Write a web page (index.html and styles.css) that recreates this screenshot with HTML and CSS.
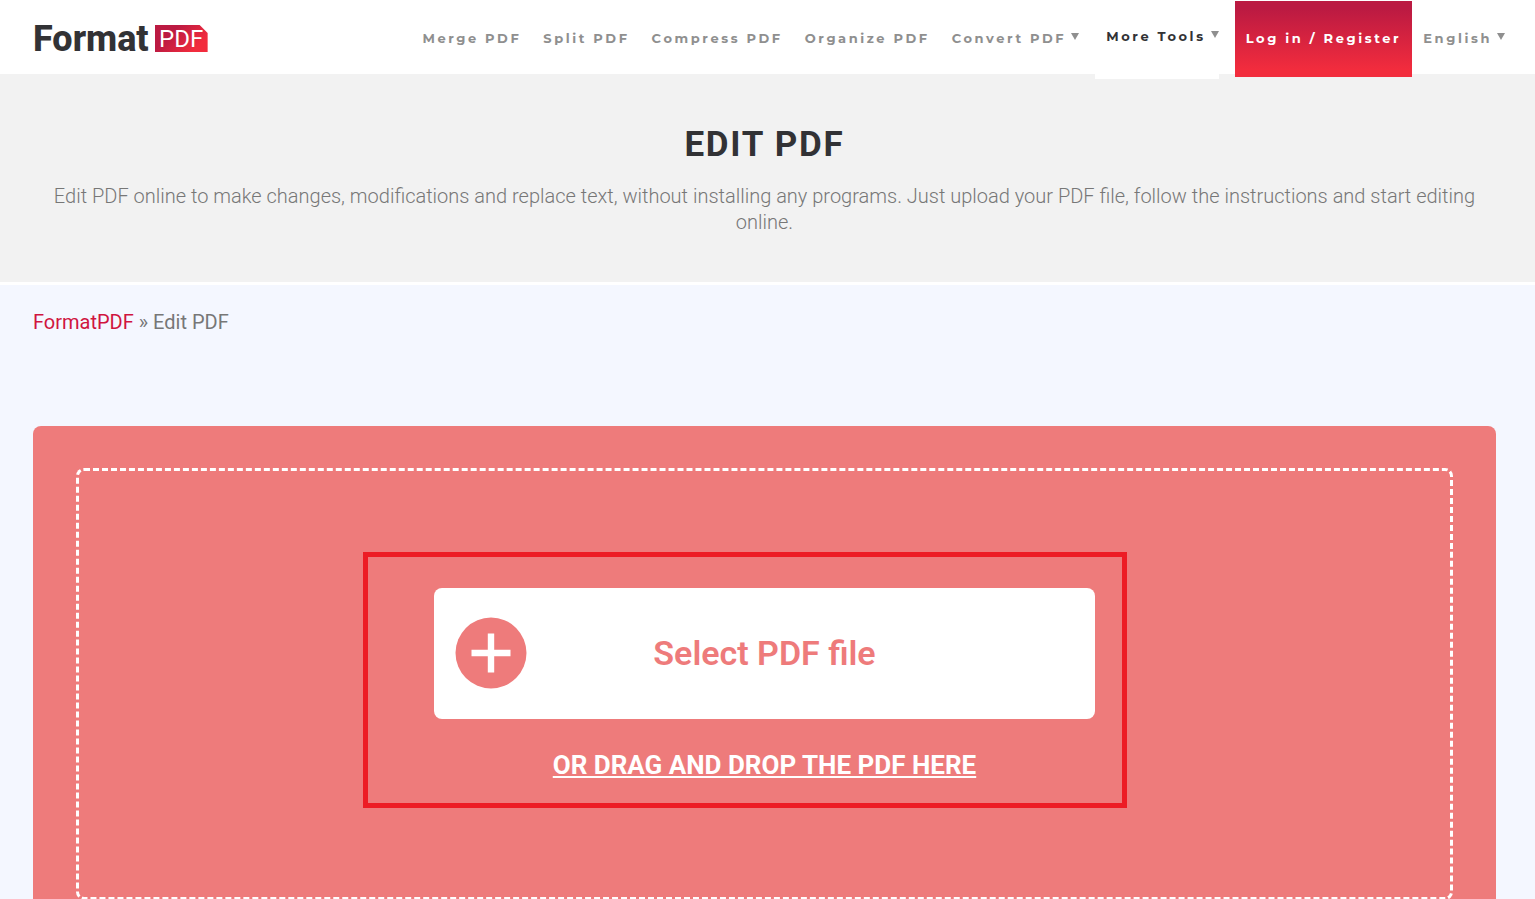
FILE: index.html
```html
<!DOCTYPE html>
<html lang="en">
<head>
  <meta charset="UTF-8">
  <meta name="viewport" content="width=device-width, initial-scale=1.0">
  <title>Edit PDF | FormatPDF</title>
  <link rel="stylesheet" href="styles.css">
</head>
<body>
  <header class="site-header">
    <a href="#" class="logo">
      <span class="logo-name">Format</span>
      <span class="logo-badge">PDF</span>
    </a>
    <nav class="main-nav">
      <a href="#">Merge PDF</a>
      <a href="#">Split PDF</a>
      <a href="#">Compress PDF</a>
      <a href="#">Organize PDF</a>
      <a href="#" class="has-menu">Convert PDF</a>
      <a href="#" class="has-menu active">More Tools</a>
      <a href="#" class="login">Log in / Register</a>
      <a href="#" class="has-menu">English</a>
    </nav>
  </header>

  <section class="hero">
    <h1>EDIT PDF</h1>
    <p>Edit PDF online to make changes, modifications and replace text, without installing any programs. Just upload your PDF file, follow the instructions and start editing online.</p>
  </section>

  <main class="content">
    <div class="breadcrumb"><a href="#">FormatPDF</a> » Edit PDF</div>

    <div class="upload">
      <div class="drop-zone">
        <div class="drop-content">
          <button type="button" class="select-btn">
            <svg class="plus" viewBox="0 0 72 72" aria-hidden="true">
              <circle cx="36" cy="36" r="35.5" fill="#ee7b7b"/>
              <path d="M36 16.5v39M16.5 36h39" stroke="#fff" stroke-width="6.4"/>
            </svg>
            Select PDF file
          </button>
          <p class="drop-text">OR DRAG AND DROP THE PDF HERE</p>
          <div class="highlight"></div>
        </div>
      </div>
    </div>
  </main>
</body>
</html>
```
FILE: styles.css
```css
* {
  box-sizing: border-box;
}

body {
  margin: 0;
  height: 100vh;
  overflow: hidden;
  font-family: Roboto, sans-serif;
  background: #f4f7ff;
  color: #777;
}

a {
  text-decoration: none;
}

/* header */
.site-header {
  display: flex;
  justify-content: space-between;
  height: 74px;
  padding: 0 19px 0 33px;
  background: #fff;
}

.logo {
  display: flex;
  align-items: center;
  gap: 6px;
  padding-top: 3px;
}

.logo-name {
  color: #323235;
  font-size: 36px;
  font-weight: 800;
  line-height: 28px;
}

.logo-badge {
  width: 53px;
  height: 27px;
  color: #fff;
  font-size: 24px;
  line-height: 28px;
  text-align: center;
  background: linear-gradient(135deg, #bb1a42 30%, #f22c3d 80%);
  clip-path: polygon(0 0, 45px 0, 100% 8px, 100% 100%, 0 100%);
}

.main-nav {
  display: flex;
  font-family: Montserrat, Inter, sans-serif;
  font-size: 13px;
  font-weight: 700;
  letter-spacing: 0.2em;
  line-height: 77px;
  white-space: nowrap;
}

.main-nav a {
  height: 76px;
  padding: 0 11px;
  color: #8f8f8f;
}

.has-menu::after {
  content: "";
  display: inline-block;
  margin-left: 5px;
  border: 4px solid transparent;
  border-top: 7px solid #8f8f8f;
  border-bottom: 0;
  vertical-align: 3px;
}

.main-nav .active {
  height: 79px;
  margin: 0 16px 0 5px;
  padding-right: 0;
  color: #323235;
  background: #fff;
  line-height: 73px;
}

.main-nav .login {
  margin-top: 1px;
  color: #fff;
  background: linear-gradient(#bb1a42 10%, #f22c3d 90%);
  line-height: 75px;
}

/* hero */
.hero {
  padding: 49px 39px 47px 33px;
  border-bottom: 3px solid #fff;
  background: #f2f2f2;
  text-align: center;
}

.hero h1 {
  margin: 0 0 16px;
  color: #323235;
  font-size: 35px;
  letter-spacing: 0.05em;
  line-height: 44px;
}

.hero p {
  margin: 0;
  font-size: 20px;
  font-weight: 300;
  line-height: 26px;
}

/* upload */
.content {
  padding: 24px 39px 0 33px;
}

.breadcrumb {
  font-size: 20px;
  line-height: 26px;
}

.breadcrumb a {
  color: #d0153f;
}

.upload {
  margin-top: 91px;
  padding: 42px 43px;
  border-radius: 8px;
  background: #ee7b7b;
}

.drop-zone {
  padding: 117px 0 116px;
  border: 3px dashed #fff;
  border-radius: 8px;
}

.drop-content {
  position: relative;
  width: calc(48% + 3px);
  margin: 0 auto;
}

.select-btn {
  position: relative;
  display: block;
  width: 100%;
  height: 131px;
  padding: 0 0 2px;
  border: 0;
  border-radius: 8px;
  background: #fff;
  color: #ee7b7b;
  font-family: inherit;
  font-size: 34px;
  font-weight: 600;
  cursor: pointer;
}

.plus {
  position: absolute;
  top: 29px;
  left: 21px;
  width: 72px;
  height: 72px;
}

.drop-text {
  margin: 30px 0 0;
  color: #fff;
  font-size: 26px;
  font-weight: 700;
  line-height: 32px;
  text-align: center;
  text-decoration: underline;
}

.highlight {
  position: absolute;
  inset: -36px -32px -27px -71px;
  border: 5px solid #ed1c24;
  pointer-events: none;
}
```
